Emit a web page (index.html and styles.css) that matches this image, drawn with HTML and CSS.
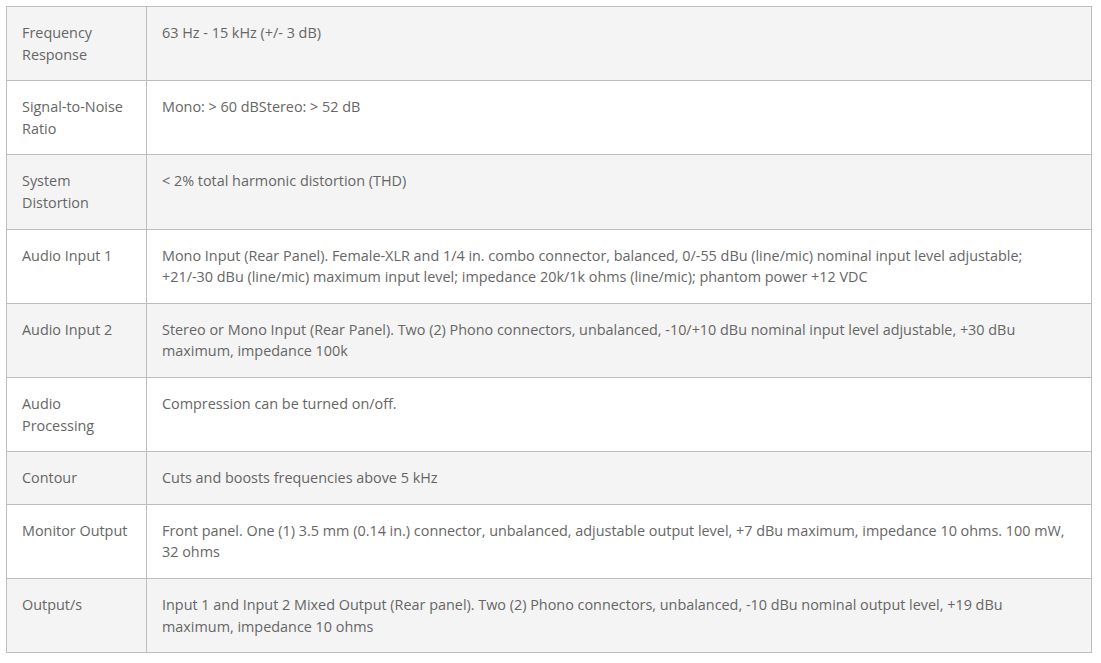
FILE: index.html
```html
<!DOCTYPE html>
<html>
<head>
<meta charset="utf-8">
<link rel="stylesheet" href="styles.css">
</head>
<body>
<table class="specs">
  <colgroup><col class="c-label"><col class="c-value"></colgroup>
  <tbody>
    <tr class="odd"><td>Frequency Response</td><td>63 Hz - 15 kHz (+/- 3 dB)</td></tr>
    <tr><td>Signal-to-Noise Ratio</td><td>Mono: &gt; 60 dBStereo: &gt; 52 dB</td></tr>
    <tr class="odd"><td>System Distortion</td><td>&lt; 2% total harmonic distortion (THD)</td></tr>
    <tr><td>Audio Input 1</td><td>Mono Input (Rear Panel). Female-XLR and 1/4 in. combo connector, balanced, 0/-55 dBu (line/mic) nominal input level adjustable; +21/-30 dBu (line/mic) maximum input level; impedance 20k/1k ohms (line/mic); phantom power +12 VDC</td></tr>
    <tr class="odd"><td>Audio Input 2</td><td>Stereo or Mono Input (Rear Panel). Two (2) Phono connectors, unbalanced, -10/+10 dBu nominal input level adjustable, +30 dBu maximum, impedance 100k</td></tr>
    <tr><td>Audio Processing</td><td>Compression can be turned on/off.</td></tr>
    <tr class="odd"><td>Contour</td><td>Cuts and boosts frequencies above 5 kHz</td></tr>
    <tr><td>Monitor Output</td><td>Front panel. One (1) 3.5 mm (0.14 in.) connector, unbalanced, adjustable output level, +7 dBu maximum, impedance 10 ohms. 100 mW, 32 ohms</td></tr>
    <tr class="odd"><td>Output/s</td><td>Input 1 and Input 2 Mixed Output (Rear panel). Two (2) Phono connectors, unbalanced, -10 dBu nominal output level, +19 dBu maximum, impedance 10 ohms</td></tr>
  </tbody>
</table>
</body>
</html>
```
FILE: styles.css
```css
html, body {
  margin: 0;
  padding: 0;
  background: #ffffff;
}
body {
  padding: 6px;
  font-family: "Open Sans", "Liberation Sans", sans-serif;
  font-size: 14.4px;
  line-height: 21.6px;
  color: #666666;
}
.specs {
  width: 1086px;
  border-collapse: collapse;
  table-layout: fixed;
}
.c-label { width: 140px; }
.specs td {
  border: 1px solid #bdbdbd;
  padding: 15px 15px;
  vertical-align: top;
  text-align: left;
}
.specs tr.odd td {
  background: #f4f4f4;
}
```
